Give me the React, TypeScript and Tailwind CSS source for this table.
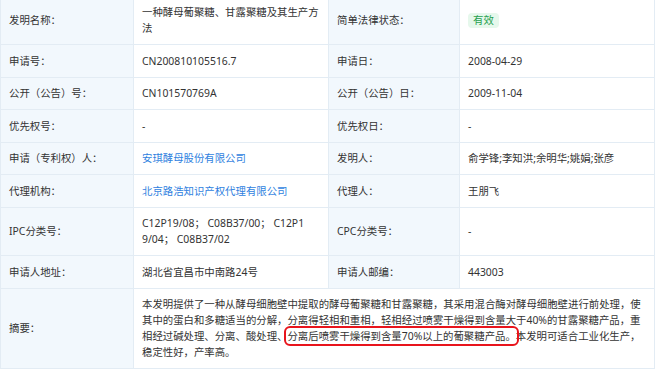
import React from 'react';

const Label = ({ children }: { children: React.ReactNode }) => (
  <td className="border border-[#e3ecf4] bg-[#f2f8fd] px-2 py-[7.75px] align-middle text-[#333]">{children}</td>
);

const Value = ({ children, colSpan }: { children: React.ReactNode; colSpan?: number }) => (
  <td colSpan={colSpan} className="border border-[#e3ecf4] bg-white px-2 py-[7.75px] align-middle text-[#333]">
    {children}
  </td>
);

const Link = ({ children }: { children: React.ReactNode }) => (
  <span className="text-[#2f7fe0] cursor-pointer">{children}</span>
);

export default function App() {
  return (
    <div className="w-[658px] h-[370px] overflow-hidden bg-white font-['Noto_Sans','Noto_Sans_CJK_SC',sans-serif]">
      <table className="w-[654px] -mt-[4.5px] table-fixed border-collapse text-[10.4px] leading-4">
        <colgroup>
          <col className="w-[133px]" />
          <col className="w-[195px]" />
          <col className="w-[131px]" />
          <col className="w-[195px]" />
        </colgroup>
        <tbody>
          <tr>
            <Label>发明名称：</Label>
            <Value>
              一种酵母葡聚糖、甘露聚糖及其生产方<br />法
            </Value>
            <Label>简单法律状态：</Label>
            <Value>
              <span className="inline-block rounded-sm bg-[#e6f8ec] px-[5px] leading-[15px] text-[#27a04f]">有效</span>
            </Value>
          </tr>
          <tr>
            <Label>申请号：</Label>
            <Value>CN200810105516.7</Value>
            <Label>申请日：</Label>
            <Value>2008-04-29</Value>
          </tr>
          <tr>
            <Label>公开（公告）号：</Label>
            <Value>CN101570769A</Value>
            <Label>公开（公告）日：</Label>
            <Value>2009-11-04</Value>
          </tr>
          <tr>
            <Label>优先权号：</Label>
            <Value>-</Value>
            <Label>优先权日：</Label>
            <Value>-</Value>
          </tr>
          <tr>
            <Label>申请（专利权）人：</Label>
            <Value>
              <Link>安琪酵母股份有限公司</Link>
            </Value>
            <Label>发明人：</Label>
            <Value>俞学锋;李知洪;余明华;姚娟;张彦</Value>
          </tr>
          <tr>
            <Label>代理机构：</Label>
            <Value>
              <Link>北京路浩知识产权代理有限公司</Link>
            </Value>
            <Label>代理人：</Label>
            <Value>王朋飞</Value>
          </tr>
          <tr>
            <Label>IPC分类号：</Label>
            <Value>
              C12P19/08； C08B37/00； C12P1<br />9/04； C08B37/02
            </Value>
            <Label>CPC分类号：</Label>
            <Value>-</Value>
          </tr>
          <tr>
            <Label>申请人地址：</Label>
            <Value>湖北省宜昌市中南路24号</Value>
            <Label>申请人邮编：</Label>
            <Value>443003</Value>
          </tr>
          <tr>
            <Label>摘要：</Label>
            <Value colSpan={3}>
              本发明提供了一种从酵母细胞壁中提取的酵母葡聚糖和甘露聚糖，其采用混合酶对酵母细胞壁进行前处理，使
              <br />
              其中的蛋白和多糖适当的分解，分离得轻相和重相，轻相经过喷雾干燥得到含量大于40%的甘露聚糖产品，重
              <br />
              相经过碱处理、分离、酸处理、
              <span className="rounded-[3px] outline-2 outline-offset-1 outline-[#e8141c]">
                分离后喷雾干燥得到含量70%以上的葡聚糖产品。
              </span>
              本发明可适合工业化生产，
              <br />
              稳定性好，产率高。
            </Value>
          </tr>
        </tbody>
      </table>
    </div>
  );
}
